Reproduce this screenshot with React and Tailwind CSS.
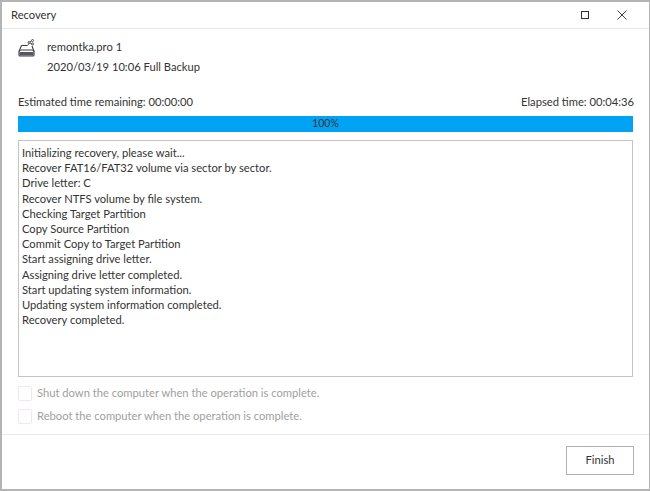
import React from "react";

const logLines = [
    "Initializing recovery, please wait...",
    "Recover FAT16/FAT32 volume via sector by sector.",
    "Drive letter: C",
    "Recover NTFS volume by file system.",
    "Checking Target Partition",
    "Copy Source Partition",
    "Commit Copy to Target Partition",
    "Start assigning drive letter.",
    "Assigning drive letter completed.",
    "Start updating system information.",
    "Updating system information completed.",
    "Recovery completed.",
];

const options = [
    "Shut down the computer when the operation is complete.",
    "Reboot the computer when the operation is complete.",
];

const DiskIcon = () => (
    <svg width="18" height="18" viewBox="0 0 18 18" fill="none" stroke="#3a3a44" strokeWidth="1.1">
        <path d="M3.5 6.5 L1 12.5 V16 Q1 17 2 17 H15 Q16 17 16 16 V12.5 L14 7" />
        <path d="M3.5 6.5 H9.5" />
        <path d="M1 12.5 Q1 11 3 11 H14 Q16 11 16 12.5" />
        <rect x="1.5" y="13" width="14" height="3.5" fill="#55555e" stroke="none" />
        <circle cx="11" cy="3.5" r="1" strokeWidth="0.9" />
        <circle cx="14.5" cy="1.5" r="1" strokeWidth="0.9" />
        <circle cx="14.5" cy="5" r="1" strokeWidth="0.9" />
        <path d="M9.5 6.5 L11 4.5 M12 3 L13.5 2 M12 4 L13.5 4.7" strokeWidth="0.9" />
    </svg>
);

export default function App() {
    return (
        <div className="w-[650px] h-[491px] flex flex-col bg-white border-2 border-r border-[#b4b4b4] text-[#333] text-[11.2px] font-['Lato',sans-serif] overflow-hidden">
            <div className="h-[27px] shrink-0 flex items-center justify-between border-b border-[#e8e8e8] pl-[9px] pr-[22px]">
                <span>Recovery</span>
                <div className="flex items-center gap-[28px]">
                    <span className="w-[8px] h-[8px] border border-[#333]" />
                    <svg width="10" height="10" viewBox="0 0 10 10" stroke="#444" strokeWidth="1">
                        <path d="M0.5 0.5 L9.5 9.5 M9.5 0.5 L0.5 9.5" />
                    </svg>
                </div>
            </div>

            <div className="flex-1 flex flex-col pl-[16px] pr-[15px] min-h-0">
                <div className="flex mt-[10px] h-[48px]">
                    <div className="w-[29px]">
                        <DiskIcon />
                    </div>
                    <div className="flex flex-col gap-[5px] leading-[15px]">
                        <span>remontka.pro 1</span>
                        <span>2020/03/19 10:06 Full Backup</span>
                    </div>
                </div>

                <div className="flex justify-between mt-[7px] leading-[15px]">
                    <span>Estimated time remaining: 00:00:00</span>
                    <span>Elapsed time: 00:04:36</span>
                </div>

                <div className="h-[16px] mt-[7px] mr-[1px] bg-[#00a2f3] flex items-center justify-center text-[10.5px] text-[#333]">
                    100%
                </div>

                <div className="h-[237px] mt-[8px] mr-[1px] border border-[#c4c4c8] pl-[3px] pt-[4px] leading-[15.2px]">
                    {logLines.map((line, index) => (
                        <div key={index}>{line}</div>
                    ))}
                </div>

                <div className="flex flex-col gap-[8px] mt-[9px] text-[#a0a0a0]">
                    {options.map((label, index) => (
                        <label key={index} className="flex items-center gap-[5px] h-[15px]">
                            <span className="w-[14px] h-[15px] border border-[#f0e8f0] rounded-[2px]" />
                            <span>{label}</span>
                        </label>
                    ))}
                </div>
            </div>

            <div className="h-[55px] shrink-0 border-t border-[#e4ecec] flex justify-end items-start pt-[11px] pr-[15px]">
                <button className="w-[68px] h-[29px] border border-[#b0b0b0] text-[#333]">Finish</button>
            </div>
        </div>
    );
}
